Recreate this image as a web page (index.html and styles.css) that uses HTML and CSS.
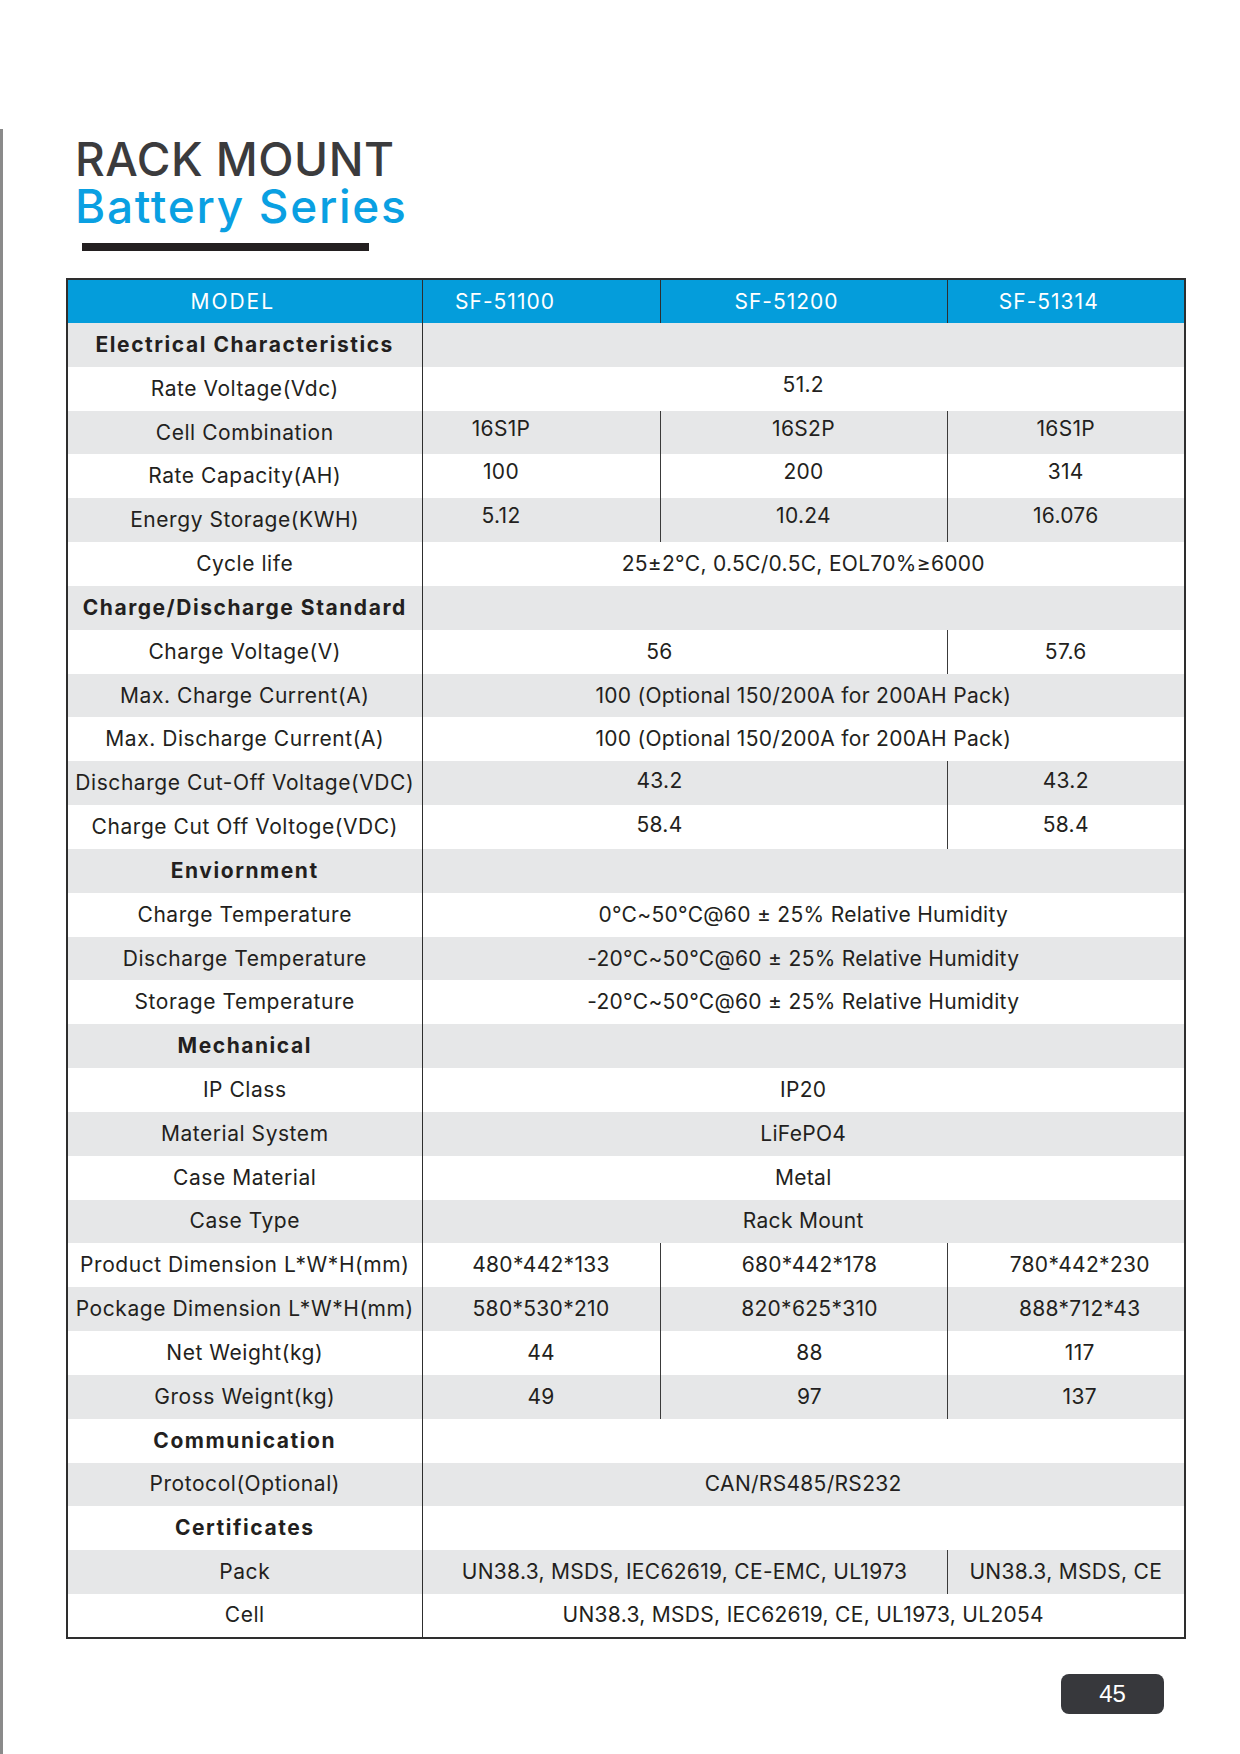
FILE: index.html
```html
<!DOCTYPE html>
<html>
<head>
    <meta charset="UTF-8">
    <meta name="viewport" content="width=device-width, initial-scale=1.0">
    <title>Rack Mount Battery Series</title>
    <link rel="stylesheet" href="styles.css">
</head>
<body>
    <div class="page">
        <div class="title">
            <h1>RACK MOUNT</h1>
            <h2>Battery Series</h2>
        </div>
        <div class="rule"></div>

        <table class="spec">
            <colgroup>
                <col style="width: 355px">
                <col style="width: 238px">
                <col style="width: 287px">
                <col style="width: 238px">
            </colgroup>
            <thead>
                <tr>
                    <th class="h-model">MODEL</th>
                    <th class="h-first">SF-51100</th>
                    <th class="h-other">SF-51200</th>
                    <th class="h-other">SF-51314</th>
                </tr>
            </thead>
            <tbody>
                <tr class="section"><td>Electrical Characteristics</td><td colspan="3"></td></tr>
                <tr class="up"><td>Rate Voltage(Vdc)</td><td colspan="3">51.2</td></tr>
                <tr class="split up"><td>Cell Combination</td><td class="left">16S1P</td><td>16S2P</td><td>16S1P</td></tr>
                <tr class="split up"><td>Rate Capacity(AH)</td><td class="left">100</td><td>200</td><td>314</td></tr>
                <tr class="split up"><td>Energy Storage(KWH)</td><td class="left">5.12</td><td>10.24</td><td>16.076</td></tr>
                <tr><td>Cycle life</td><td colspan="3">25±2°C, 0.5C/0.5C, EOL70%≥6000</td></tr>
                <tr class="section"><td>Charge/Discharge Standard</td><td colspan="3"></td></tr>
                <tr class="split"><td>Charge Voltage(V)</td><td colspan="2" class="pair">56</td><td>57.6</td></tr>
                <tr><td>Max. Charge Current(A)</td><td colspan="3">100 (Optional 150/200A for 200AH Pack)</td></tr>
                <tr><td>Max. Discharge Current(A)</td><td colspan="3">100 (Optional 150/200A for 200AH Pack)</td></tr>
                <tr class="split up-sm"><td>Discharge Cut-Off Voltage(VDC)</td><td colspan="2" class="pair">43.2</td><td>43.2</td></tr>
                <tr class="split up-sm"><td>Charge Cut Off Voltoge(VDC)</td><td colspan="2" class="pair">58.4</td><td>58.4</td></tr>
                <tr class="section"><td>Enviornment</td><td colspan="3"></td></tr>
                <tr><td>Charge Temperature</td><td colspan="3">0°C~50°C@60 ± 25% Relative Humidity</td></tr>
                <tr><td>Discharge Temperature</td><td colspan="3">-20°C~50°C@60 ± 25% Relative Humidity</td></tr>
                <tr><td>Storage Temperature</td><td colspan="3">-20°C~50°C@60 ± 25% Relative Humidity</td></tr>
                <tr class="section"><td>Mechanical</td><td colspan="3"></td></tr>
                <tr><td>IP Class</td><td colspan="3">IP20</td></tr>
                <tr><td>Material System</td><td colspan="3">LiFePO4</td></tr>
                <tr><td>Case Material</td><td colspan="3">Metal</td></tr>
                <tr><td>Case Type</td><td colspan="3">Rack Mount</td></tr>
                <tr class="split dims"><td>Product Dimension L*W*H(mm)</td><td>480*442*133</td><td>680*442*178</td><td>780*442*230</td></tr>
                <tr class="split dims"><td>Pockage Dimension L*W*H(mm)</td><td>580*530*210</td><td>820*625*310</td><td>888*712*43</td></tr>
                <tr class="split dims"><td>Net Weight(kg)</td><td>44</td><td>88</td><td>117</td></tr>
                <tr class="split dims"><td>Gross Weignt(kg)</td><td>49</td><td>97</td><td>137</td></tr>
                <tr class="section"><td>Communication</td><td colspan="3"></td></tr>
                <tr><td>Protocol(Optional)</td><td colspan="3">CAN/RS485/RS232</td></tr>
                <tr class="section"><td>Certificates</td><td colspan="3"></td></tr>
                <tr class="split"><td>Pack</td><td colspan="2">UN38.3, MSDS, IEC62619, CE-EMC, UL1973</td><td>UN38.3, MSDS, CE</td></tr>
                <tr><td>Cell</td><td colspan="3">UN38.3, MSDS, IEC62619, CE, UL1973, UL2054</td></tr>
            </tbody>
        </table>

        <div class="footer">
            <div class="page-number">45</div>
        </div>
    </div>
</body>
</html>
```

FILE: styles.css
```css
body {
    margin: 0;
    padding: 0;
    background-color: #ffffff;
    font-family: Inter, "Noto Sans", sans-serif;
    color: #231f20;
}
.page {
    margin-top: 129px;
    min-height: 1625px;
    border-left: 3px solid #8a8a8a;
    padding-top: 7px;
    box-sizing: border-box;
}
.title {
    padding-left: 72px;
}
.title h1,
.title h2 {
    margin: 0;
    font-size: 46px;
    line-height: 47px;
    font-weight: 500;
}
.title h1 {
    color: #3b3b3d;
    letter-spacing: 0.5px;
}
.title h2 {
    color: #0aa0e2;
    letter-spacing: 1.7px;
}
.rule {
    width: 287px;
    height: 8px;
    margin: 13px 0 0 79px;
    background-color: #231f20;
}
.spec {
    margin: 27px 0 0 63px;
    width: 1118px;
    table-layout: fixed;
    border-collapse: collapse;
    border: 2px solid #2e2e2e;
    font-size: 21px;
    letter-spacing: 0.3px;
}
.spec th,
.spec td {
    padding: 0;
    text-align: center;
    white-space: nowrap;
    line-height: 24px;
}
.spec thead tr {
    height: 44px;
    background-color: #049ddb;
}
.spec th {
    color: #ffffff;
    font-weight: 400;
    letter-spacing: 1px;
    border-left: 1.5px solid #2e2e2e;
}
.spec th.h-model { padding-right: 24px; letter-spacing: 2px; }
.spec th.h-first { padding-right: 72px; }
.spec th.h-other { padding-right: 34px; }
.spec tbody tr {
    height: 43.83px;
}
.spec tbody tr:nth-child(odd) {
    background-color: #e6e7e8;
}
.spec td:first-child {
    border-right: 1.5px solid #2e2e2e;
    letter-spacing: 0.55px;
}
.spec .split td + td {
    border-left: 1.5px solid #3a3a3a;
}
.spec .section td:first-child {
    font-weight: 700;
    letter-spacing: 1.55px;
}
.spec .up td + td { padding-bottom: 8px; }
.spec .up-sm td + td { padding-bottom: 5px; }
.spec td.left { padding-right: 80px; }
.spec td.pair { padding-right: 50px; }
.spec .dims td:nth-child(3) { padding-left: 12px; }
.spec .dims td:nth-child(4) { padding-left: 28px; }
.footer {
    display: flex;
    justify-content: flex-end;
    padding: 35px 76px 0 0;
}
.page-number {
    width: 103px;
    height: 40px;
    border-radius: 8px;
    background-color: #37383c;
    color: #ffffff;
    font-family: "Liberation Sans", Arial, sans-serif;
    font-size: 24px;
    line-height: 40px;
    text-align: center;
}
```
